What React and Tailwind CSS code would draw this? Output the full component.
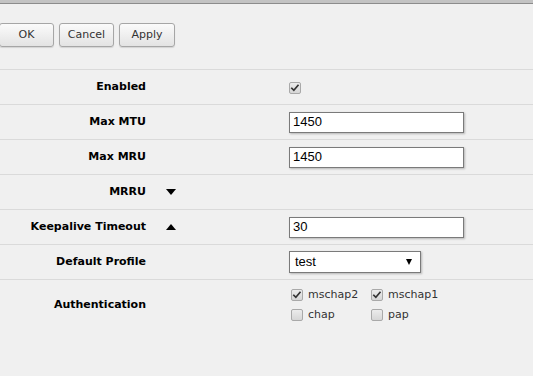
import React from 'react';

const labelFont = { fontFamily: '"DejaVu Sans", Verdana, sans-serif' };

function Check({ checked }) {
  return (
    <span className="inline-flex w-3 h-3 items-center justify-center rounded-[2px] border border-[#a9a9a9] bg-gradient-to-b from-[#ececec] to-[#d6d6d6] shrink-0">
      {checked && (
        <svg viewBox="0 0 12 12" className="w-[10px] h-[10px]">
          <path d="M2.2 6.4 L4.6 8.8 L9.6 2.8" fill="none" stroke="#333" strokeWidth="2" strokeLinecap="square" />
        </svg>
      )}
    </span>
  );
}

function Btn({ children, className }) {
  return (
    <button
      className={`h-6 w-[55px] rounded-[3px] border border-[#a6a6a6] bg-gradient-to-b from-[#fbfbfb] to-[#e3e3e3] text-[11px] text-[#333] shadow-[0_1px_1px_rgba(0,0,0,0.12)] ${className || ''}`}
      style={labelFont}
    >
      {children}
    </button>
  );
}

function TextInput({ value, width = 'w-[175px]' }) {
  return (
    <div className={`${width} h-[21px] border border-[#7a7a7a] bg-white px-[3px] flex items-center text-[13px] text-black shadow-[1px_1px_2px_rgba(0,0,0,0.25)]`} style={{ fontFamily: '"Liberation Sans", Arial, sans-serif' }}>
      {value}
    </div>
  );
}

function Row({ label, arrow, children, className = 'h-[35px]' }) {
  return (
    <div className={`flex items-center border-b border-[#dadada] ${className}`}>
      <div className="w-[146px] text-right text-[11px] font-bold text-black" style={labelFont}>
        {label}
      </div>
      <div className="w-[143px] pl-[20px] flex items-center">
        {arrow === 'down' && <span className="w-0 h-0 border-l-[5px] border-r-[5px] border-t-[6px] border-l-transparent border-r-transparent border-t-black" />}
        {arrow === 'up' && <span className="w-0 h-0 border-l-[5px] border-r-[5px] border-b-[6px] border-l-transparent border-r-transparent border-b-black" />}
      </div>
      <div className="flex-1">{children}</div>
    </div>
  );
}

function AuthOpt({ checked, label }) {
  return (
    <div className="flex items-center gap-[5px] w-[80px] text-[11px] text-[#333]" style={labelFont}>
      <Check checked={checked} />
      <span>{label}</span>
    </div>
  );
}

export default function App() {
  return (
    <div className="min-h-screen w-full bg-[#f0f0f0]">
      <div className="h-[4px] bg-[#c3c3c3] border-b border-[#8c8c8c]" />
      <div className="flex gap-[5px] pt-[19px] h-[66px] -ml-[1px] border-b border-[#dadada]">
        <Btn>OK</Btn>
        <Btn>Cancel</Btn>
        <Btn className="w-[56px]">Apply</Btn>
      </div>
      <Row label="Enabled">
        <Check checked />
      </Row>
      <Row label="Max MTU">
        <TextInput value="1450" />
      </Row>
      <Row label="Max MRU">
        <TextInput value="1450" />
      </Row>
      <Row label="MRRU" arrow="down" />
      <Row label="Keepalive Timeout" arrow="up">
        <TextInput value="30" />
      </Row>
      <Row label="Default Profile">
        <div className="w-[132px] h-[22px] border border-[#7a7a7a] bg-white pl-[5px] pr-[8px] flex items-center justify-between text-[13px] text-black shadow-[1px_1px_2px_rgba(0,0,0,0.25)]" style={{ fontFamily: '"Liberation Sans", Arial, sans-serif' }}>
          <span>test</span>
          <span className="w-0 h-0 border-l-[3px] border-r-[3px] border-t-[6px] border-l-transparent border-r-transparent border-t-black" />
        </div>
      </Row>
      <div className="flex items-center h-[50px]">
        <div className="w-[146px] text-right text-[11px] font-bold text-black" style={labelFont}>
          Authentication
        </div>
        <div className="w-[145px]" />
        <div className="flex flex-col gap-[4px]">
          <div className="flex">
            <AuthOpt checked label="mschap2" />
            <AuthOpt checked label="mschap1" />
          </div>
          <div className="flex">
            <AuthOpt label="chap" />
            <AuthOpt label="pap" />
          </div>
        </div>
      </div>
    </div>
  );
}
